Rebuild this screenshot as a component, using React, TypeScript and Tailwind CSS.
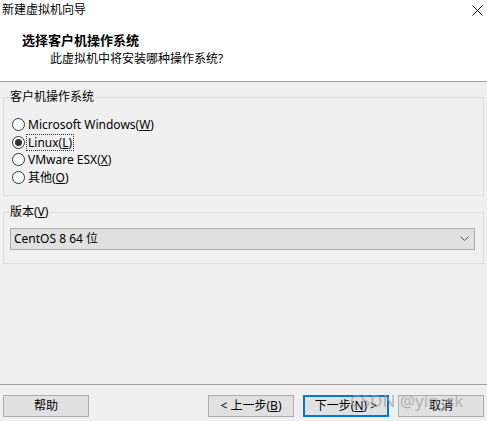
import React from 'react'

const font = { fontFamily: '"Noto Sans", "Noto Sans CJK SC", sans-serif' }

function Radio({ checked, children }: { checked?: boolean; children: React.ReactNode }) {
  return (
    <div className="flex h-[17.5px] items-center">
      <span className="ml-[8px] flex h-[13px] w-[13px] items-center justify-center rounded-full border border-[#333] bg-white">
        {checked && <span className="h-[7px] w-[7px] rounded-full bg-[#333]" />}
      </span>
      <span className={`ml-[2px] px-[1px] leading-[15px] ${checked ? 'outline outline-1 outline-dotted outline-[#333]' : ''}`}>
        {children}
      </span>
    </div>
  )
}

function Btn({ children, primary }: { children: React.ReactNode; primary?: boolean }) {
  return (
    <button
      className={`flex h-[22px] w-[86px] items-center justify-center bg-[#e1e1e1] text-[12px] text-black ${
        primary ? 'border-2 border-[#0078d7]' : 'border border-[#adadad]'
      }`}
    >
      {children}
    </button>
  )
}

export default function App() {
  return (
    <div style={font} className="relative flex h-[421px] w-[487px] flex-col bg-[#f0f0f0] text-[12px] text-black">
      <div className="h-[82px] border-b border-[#a0a0a0] bg-white">
        <div className="flex h-[20px] items-center justify-between pl-[2px] pr-[4px]">
          <span>新建虚拟机向导</span>
          <svg width="11" height="11" viewBox="0 0 11 11" className="mt-[1px]">
            <path d="M0.5 0.5 L10.5 10.5 M10.5 0.5 L0.5 10.5" stroke="#111" strokeWidth="1" />
          </svg>
        </div>
        <div className="ml-[22px] mt-[12px] text-[13px] font-bold leading-[16px]">选择客户机操作系统</div>
        <div className="ml-[50px] mt-[3px] leading-[16px]">此虚拟机中将安装哪种操作系统?</div>
      </div>

      <fieldset className="mx-[3px] mt-[7px] border border-[#dcdcdc] pb-[9px] pr-0 pl-0">
        <legend className="ml-[5px] px-[1px] leading-[16px]">客户机操作系统</legend>
        <div className="mt-[11px]">
          <Radio>Microsoft Windows(<u>W</u>)</Radio>
          <Radio checked>Linux(<u>L</u>)</Radio>
          <Radio>VMware ESX(<u>X</u>)</Radio>
          <Radio>其他(<u>O</u>)</Radio>
        </div>
      </fieldset>

      <fieldset className="mx-[3px] mt-[8px] border border-[#dcdcdc] pb-[13px] pl-[6px] pr-[8px]">
        <legend className="ml-[-1px] px-[1px] leading-[16px]">版本(<u>V</u>)</legend>
        <div className="mt-[8px] flex h-[22px] items-center justify-between border border-[#adadad] bg-[#e1e1e1] pl-[3px] pr-[5px]">
          <span>CentOS 8 64 位</span>
          <svg width="9" height="6" viewBox="0 0 9 6">
            <path d="M0.5 0.5 L4.5 4.5 L8.5 0.5" fill="none" stroke="#555" strokeWidth="1" />
          </svg>
        </div>
      </fieldset>

      <div className="flex-1" />

      <div className="border-t border-[#a0a0a0] px-[3px] pb-[4px] pt-[10px]">
        <div className="flex items-center">
          <Btn>帮助</Btn>
          <div className="flex-1" />
          <div className="flex gap-[9px]">
            <Btn>&lt; 上一步(<u>B</u>)</Btn>
            <Btn primary>下一步(<u>N</u>) &gt;</Btn>
            <Btn>取消</Btn>
          </div>
        </div>
      </div>

      <div className="pointer-events-none absolute left-[350px] top-[388px] text-[17px] text-[#9a9a9a]/70">
        CSDN @yin_sk
      </div>
    </div>
  )
}
